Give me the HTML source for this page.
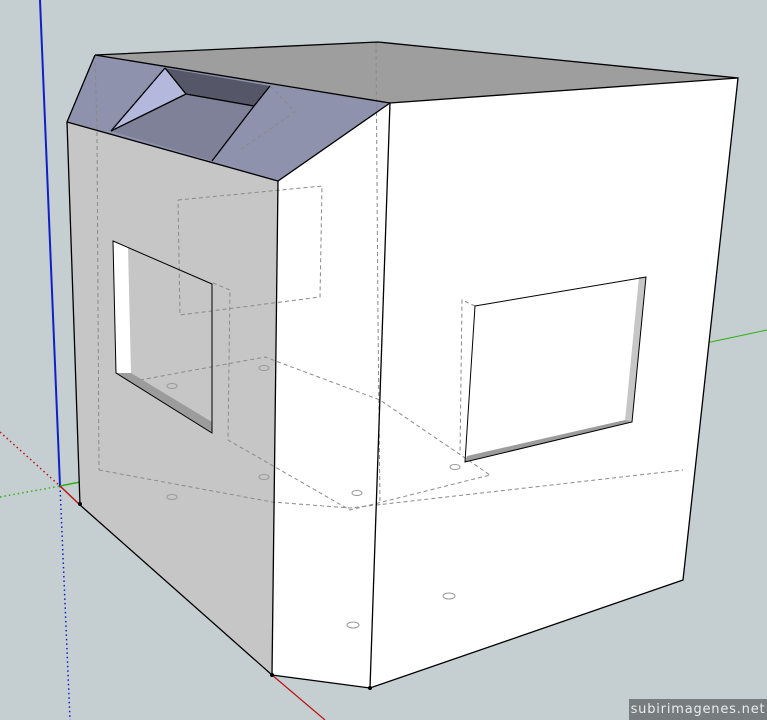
<!DOCTYPE html>
<html><head><style>html,body{margin:0;padding:0;background:#c5cfd1;overflow:hidden}svg{display:block}
.wm{position:absolute;left:629px;top:699px;width:138px;height:21px;background:#777c7e;color:#e8ecec;font:13px "DejaVu Sans",sans-serif;letter-spacing:0.8px;line-height:21px;text-align:center;white-space:nowrap;overflow:hidden}</style></head>
<body>
<svg width="767" height="720" viewBox="0 0 767 720" xmlns="http://www.w3.org/2000/svg">
<rect width="767" height="720" fill="#c5cfd1"/>
<line x1="40" y1="0" x2="60" y2="486" stroke="#1020c8" stroke-width="2"/>
<line x1="60" y1="486" x2="70" y2="720" stroke="#1020c8" stroke-width="1.5" stroke-dasharray="1.5,3"/>
<line x1="0" y1="432" x2="60" y2="486" stroke="#c01010" stroke-width="1.5" stroke-dasharray="1.5,3"/>
<line x1="0" y1="497" x2="60" y2="486" stroke="#30b010" stroke-width="1.5" stroke-dasharray="1.5,3"/>
<line x1="60" y1="486" x2="80" y2="482" stroke="#30b010" stroke-width="1.5"/>
<line x1="706" y1="343" x2="767" y2="330" stroke="#30b010" stroke-width="1"/>
<line x1="60" y1="486" x2="80" y2="505" stroke="#c01010" stroke-width="1.5"/>
<line x1="272" y1="675" x2="325" y2="720" stroke="#c01010" stroke-width="1.2"/>
<polygon points="67,122 278,181 272,675 80,505" fill="#c6c6c6"/>
<polygon points="278,181 390,103 370,688 272,675" fill="#ffffff"/>
<polygon points="390,103 738,78 683,580 370,688" fill="#ffffff"/>
<polygon points="95,55 378,42 738,78 390,103" fill="#9e9e9e"/>
<polygon points="95,55 67,122 278,181 390,103" fill="#8e92ac"/>
<polygon points="165,68 270,86 254,106 186,94" fill="#555668"/>
<polygon points="165,68 186,94 111,131" fill="#b4b8dc"/>
<polygon points="186,94 254,106 212,161 111,131" fill="#7f8199"/>
<g stroke="#8a8a8a" stroke-width="1" fill="none" stroke-dasharray="4,3">
<polyline points="95,55 97,135 99,470"/>
<polyline points="376,42 378,320 380,505"/>
<polyline points="99,470 272,502 350,508 683,470"/>
<polyline points="178,200 322,186 320,297 180,315 178,200"/>
<polyline points="213,283 230,290 228,440 350,510 490,475"/>
<polyline points="140,380 265,357 380,400 490,475"/>
<polyline points="270,86 295,112 240,150"/>
<polyline points="475,306 462,300 460,455"/>
</g>
<g fill="none" stroke="#999" stroke-width="1">
<ellipse cx="172" cy="497" rx="5" ry="2.5"/><ellipse cx="264" cy="477" rx="5" ry="2.5"/>
<ellipse cx="172" cy="386" rx="5" ry="2.5"/><ellipse cx="264" cy="368" rx="5" ry="2.5"/>
<ellipse cx="357" cy="493" rx="5" ry="2.5"/><ellipse cx="455" cy="467" rx="5" ry="2.5"/>
<ellipse cx="353" cy="625" rx="6" ry="3"/><ellipse cx="449" cy="596" rx="6" ry="3"/>
</g>
<polygon points="113,241 128,248 131,373 116,373" fill="#ffffff"/>
<polygon points="116,373 131,373 212,422 212,433" fill="#9c9c9c"/>
<polygon points="113,241 212,284 212,433 116,373 113,241" fill="none" stroke="#000" stroke-width="1"/>
<polygon points="639,277 646,277 632,422 625,421" fill="#c6c6c6"/>
<polygon points="465,462 632,422 625,420 467,456" fill="#9c9c9c"/>
<polygon points="475,306 646,277 632,422 465,462" fill="none" stroke="#000" stroke-width="1"/>
<g stroke="#000" stroke-width="1.3" fill="none">
<polyline points="95,55 378,42 738,78 683,580 370,688 272,675 80,505 67,122 95,55"/>
<polyline points="67,122 278,181 390,103 738,78"/>
<line x1="95" y1="55" x2="390" y2="103"/>
<line x1="278" y1="181" x2="272" y2="675"/>
<line x1="390" y1="103" x2="370" y2="688"/>
<polyline points="165,68 111,131"/>
<polyline points="165,68 186,94 254,106 270,86"/>
<line x1="186" y1="94" x2="111" y2="131"/>
<line x1="254" y1="106" x2="212" y2="161"/>
</g>
<circle cx="80" cy="504" r="2" fill="#000"/><circle cx="272" cy="675" r="2" fill="#000"/><circle cx="370" cy="688" r="2" fill="#000"/>
</svg>
<div class="wm">subirimagenes.net</div>
</body></html>
